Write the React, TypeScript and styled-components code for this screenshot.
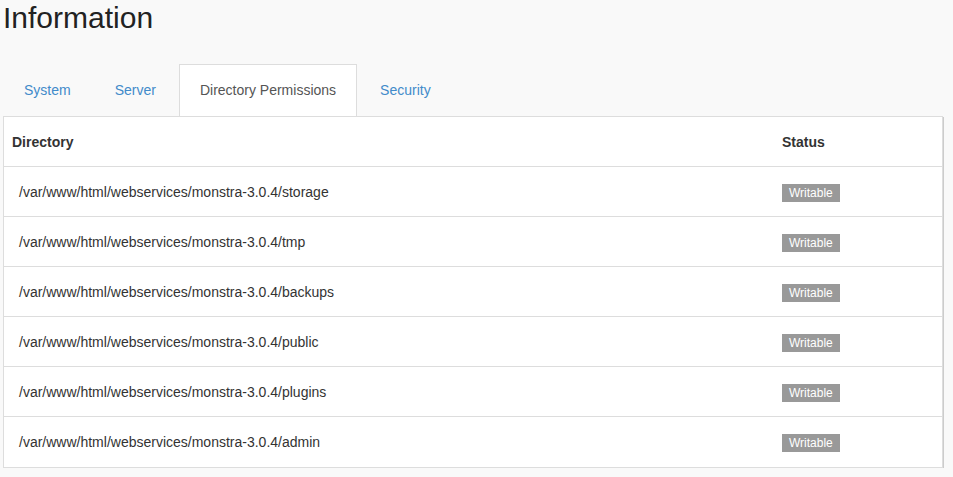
import React from "react";
import styled, { createGlobalStyle } from "styled-components";

const Global = createGlobalStyle`
  html, body { margin: 0; padding: 0; background: #f9f9f9; }
  body { font-family: "Liberation Sans", Arial, sans-serif; font-size: 14px; color: #333; }
  * { box-sizing: border-box; }
`;

const Page = styled.div`
  padding: 1px 10px 0 3px;
`;

const Title = styled.h1`
  margin: 0;
  font-size: 30px;
  font-weight: 400;
  line-height: 34px;
  color: #222;
`;

const Tabs = styled.ul`
  list-style: none;
  margin: 29px 0 0 0;
  padding: 0;
  display: flex;
`;

const Tab = styled.li<{ $active?: boolean }>`
  margin-right: 2px;
  padding: 15px 20px 16px;
  line-height: 20px;
  border: 1px solid ${(p) => (p.$active ? "#ddd" : "transparent")};
  border-bottom: none;
  background: ${(p) => (p.$active ? "#fff" : "transparent")};
  color: ${(p) => (p.$active ? "#555" : "#428bca")};
  cursor: pointer;
`;

const Panel = styled.div`
  border: 1px solid #ddd;
  background: #fff;
  box-shadow: 1px 1px 0 #ccc;
`;

const Table = styled.table`
  width: 100%;
  border-collapse: collapse;
`;

const Th = styled.th<{ $w?: number }>`
  text-align: left;
  font-weight: 700;
  padding: 15px 8px 14px;
  line-height: 20px;
  color: #333;
  border-bottom: 1px solid #ddd;
  width: ${(p) => (p.$w ? `${p.$w}px` : "auto")};
`;

const Td = styled.td<{ $pl?: number }>`
  height: 50px;
  padding: 15px 8px 14px ${(p) => p.$pl ?? 8}px;
  line-height: 20px;
  color: #333;
  border-bottom: 1px solid #ddd;
`;

const Row = styled.tr`
  &:last-child td { border-bottom: none; }
`;

const Badge = styled.span`
  display: inline-block;
  background: #999;
  color: #fff;
  font-size: 12px;
  line-height: 18px;
  height: 18px;
  padding: 0 7px;
  vertical-align: top;
  margin-top: 2px;
`;

const dirs = ["storage", "tmp", "backups", "public", "plugins", "admin"];

export default function App() {
  return (
    <>
      <Global />
      <Page>
        <Title>Information</Title>
        <Tabs>
          <Tab>System</Tab>
          <Tab>Server</Tab>
          <Tab $active>Directory Permissions</Tab>
          <Tab>Security</Tab>
        </Tabs>
        <Panel>
          <Table>
            <thead>
              <tr>
                <Th>Directory</Th>
                <Th $w={168}>Status</Th>
              </tr>
            </thead>
            <tbody>
              {dirs.map((d) => (
                <Row key={d}>
                  <Td $pl={15}>/var/www/html/webservices/monstra-3.0.4/{d}</Td>
                  <Td>
                    <Badge>Writable</Badge>
                  </Td>
                </Row>
              ))}
            </tbody>
          </Table>
        </Panel>
      </Page>
    </>
  );
}
